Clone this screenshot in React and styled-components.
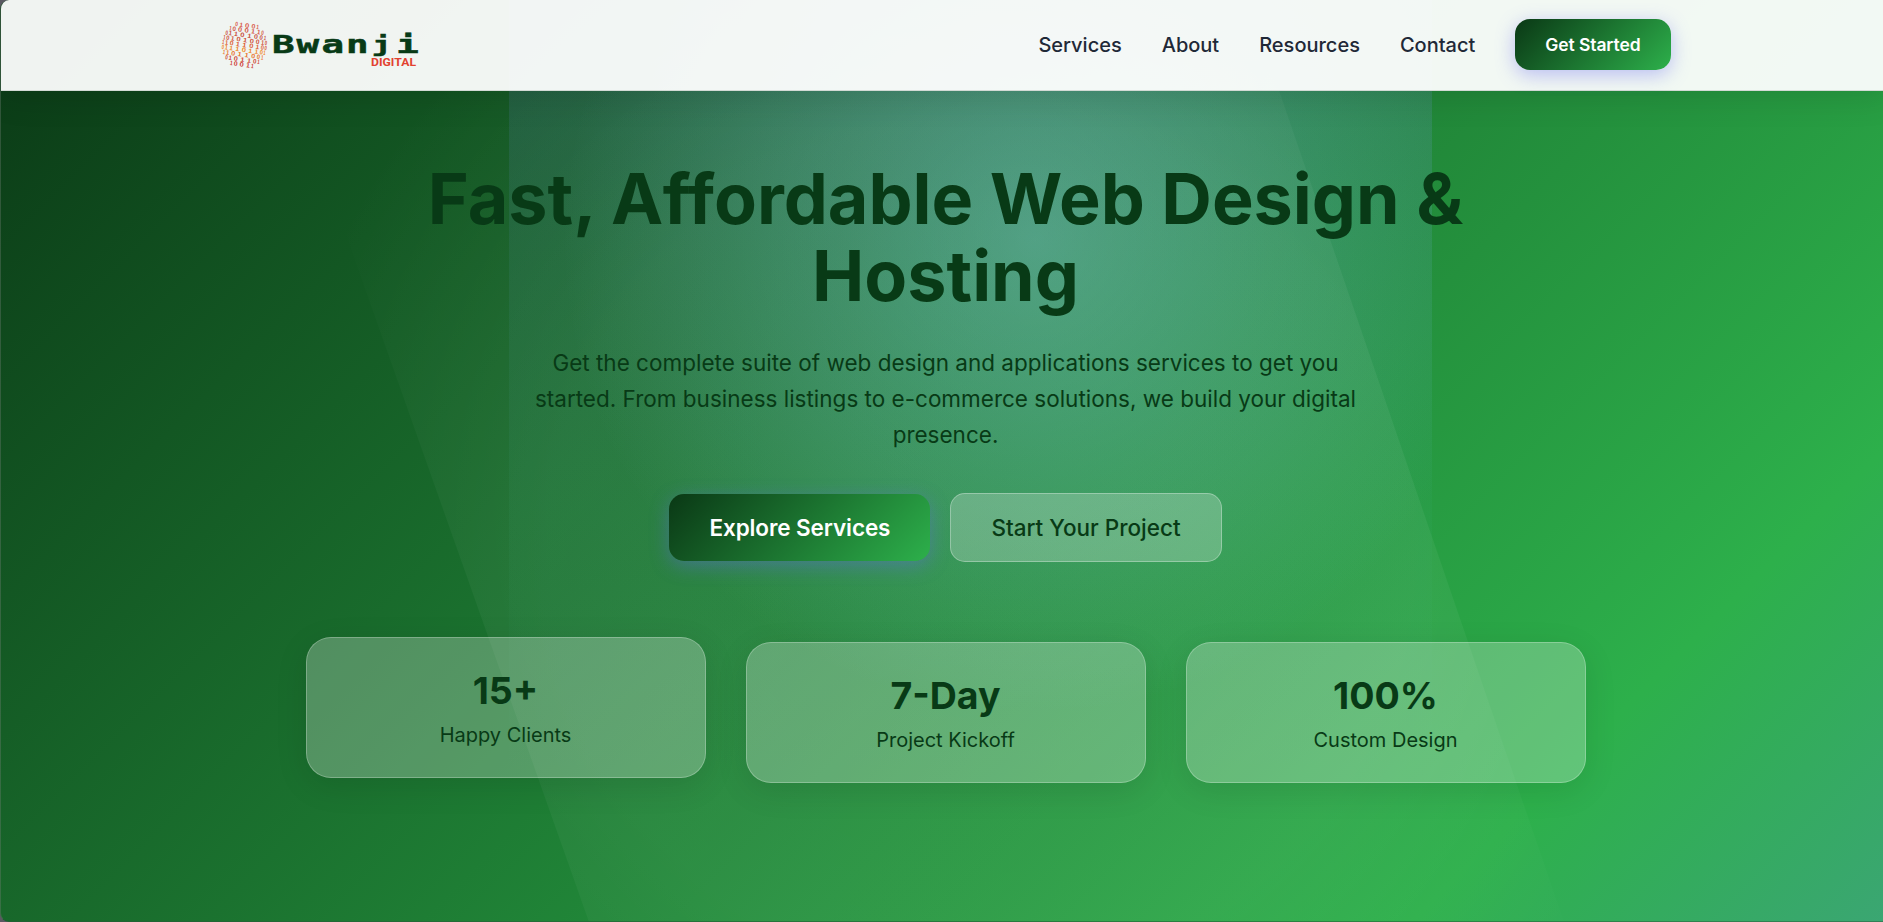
import React from "react";
import styled, { createGlobalStyle, css } from "styled-components";

const ink = "#083a16";
const brandGradient = "linear-gradient(135deg, #0a3815 0%, #2db04b 100%)";

const GlobalStyle = createGlobalStyle`
  *, *::before, *::after { box-sizing: border-box; }
  body {
    margin: 0;
    background: #5b5962;
    overflow: hidden;
    font-family: Inter, "Liberation Sans", sans-serif;
    -webkit-font-smoothing: antialiased;
  }
  h1, p { margin: 0; }
`;

const Page = styled.div`
  position: relative;
  width: 1890px;
  height: 922px;
  border-left: 1px solid rgba(120, 130, 122, 0.35);
  border-bottom: 1px solid rgba(40, 90, 60, 0.5);
  border-radius: 9px 0 0 9px;
  overflow: hidden;
  background: linear-gradient(135deg, #0a3815 0%, #2db04b 83%, #3ba673 100%) border-box;
`;

const Glow = styled.div`
  position: absolute;
  top: 0;
  left: 508px;
  width: 923px;
  height: 922px;
  background:
    radial-gradient(circle at 57% 26%, rgba(145, 220, 245, 0.33) 0%, rgba(145, 220, 245, 0) 55%),
    linear-gradient(180deg, rgba(110, 125, 215, 0.19) 0%, rgba(90, 150, 190, 0.11) 28%, rgba(70, 180, 150, 0.07) 55%, rgba(70, 180, 150, 0) 84%);
`;

const Beam = styled.div`
  position: absolute;
  inset: 0;
  clip-path: polygon(262px 0, 1247px 0, 1563px 922px, 588px 922px);
  background: radial-gradient(circle 720px at 980px 550px, rgba(255, 255, 255, 0.05) 0%, rgba(255, 255, 255, 0.055) 60%, rgba(255, 255, 255, 0) 100%);
`;

const Header = styled.header`
  position: relative;
  height: 91px;
  display: flex;
  justify-content: center;
  background: rgba(255, 255, 255, 0.94);
  border-bottom: 1px solid #d3dad5;
  box-shadow: 0 8px 32px rgba(0, 0, 0, 0.1);
`;

const HeaderInner = styled.div`
  width: 1450px;
  height: 89px;
  display: flex;
  align-items: center;
  justify-content: space-between;
`;

const Logo = styled.svg`
  display: block;
  width: 202px;
  height: 50px;
`;

const Nav = styled.nav`
  display: flex;
  align-items: center;
  gap: 40px;
`;

const NavLink = styled.a`
  color: #1f2937;
  font-size: 20px;
  font-weight: 500;
  text-decoration: none;
`;

const Button = styled.button`
  font-family: inherit;
  font-size: ${(p) => (p.$small ? "17.5px" : "22.5px")};
  line-height: ${(p) => (p.$small ? "21px" : "27px")};
  padding: ${(p) => (p.$small ? "15px 30px" : "20px 40px")};
  border-radius: 15px;
  white-space: nowrap;
  ${(p) =>
    p.$glass
      ? css`
          font-weight: 500;
          color: ${ink};
          background: rgba(255, 255, 255, 0.23);
          border: 1px solid rgba(255, 255, 255, 0.3);
        `
      : css`
          font-weight: 600;
          letter-spacing: -0.1px;
          color: #fff;
          background: ${brandGradient};
          border: 0;
          box-shadow: 0 5px 19px rgba(99, 102, 241, 0.4);
        `}
`;

const Hero = styled.main`
  position: relative;
  display: flex;
  flex-direction: column;
  align-items: center;
  padding-top: 69px;
  text-align: center;
  color: ${ink};
`;

const Title = styled.h1`
  width: 1125px;
  font-size: 70px;
  font-weight: 700;
  line-height: 77px;
`;

const Lead = styled.p`
  width: 850px;
  margin-top: 31px;
  font-size: 22.5px;
  line-height: 36px;
`;

const Actions = styled.div`
  display: flex;
  align-items: center;
  gap: 20px;
  margin-top: 40px;
`;

const Stats = styled.section`
  display: flex;
  gap: 40px;
  margin-top: 80px;
`;

const Stat = styled.div`
  width: 400px;
  height: 141px;
  padding-top: 29px;
  border: 1px solid rgba(255, 255, 255, 0.25);
  border-radius: 25px;
  background: rgba(255, 255, 255, 0.25);
  box-shadow: 0 8px 32px rgba(0, 0, 0, 0.1);
  transform: translateY(${(p) => (p.$raised ? "-5px" : "0")});
`;

const StatValue = styled.div`
  font-size: 37.5px;
  font-weight: 700;
  line-height: 48px;
`;

const StatLabel = styled.div`
  margin-top: 4px;
  font-size: 20px;
  line-height: 32px;
`;

const rows = ["01001", "1000110", "01101001", "101010010", "110110100", "011101101", "11011001", "0101101", "10011"];
const rowColors = ["#d9604f", "#d4584a", "#c9503f", "#d0543d", "#dd6238", "#f08a2c", "#e8752f", "#cf4b3b", "#cf4038"];

const digits = rows.flatMap((row, r) => {
  const y = (r - 4) * 4.9;
  const half = Math.sqrt(23 * 23 - y * y);
  return [...row].map((d, c) => {
    const lon = ((c + 0.5) / row.length - 0.5) * 2.7;
    return {
      d,
      x: half * Math.sin(lon),
      y,
      sx: 0.35 + 0.85 * Math.cos(lon),
      color: rowColors[r],
    };
  });
});

const BrandLogo = () => (
  <Logo viewBox="0 0 202 50" role="img" aria-label="Bwanji Digital">
    <g transform="translate(23.5 25) rotate(8)" fontFamily="Liberation Sans, sans-serif" fontSize="6.4" fontWeight="700" textAnchor="middle">
      {digits.map((g, i) => (
        <text key={i} transform={`translate(${g.x} ${g.y + 2.2}) scale(${g.sx} 1)`} fill={g.color}>
          {g.d}
        </text>
      ))}
    </g>
    <text transform="translate(51 33) scale(1.5 1)" x="0 16.4 33 49.3 66.5 82.8" fill={ink} stroke={ink} strokeWidth="0.5" fontFamily="DejaVu Sans Mono, monospace" fontWeight="700" fontSize="25">
      Bwan<tspan fontSize="22" dy="-1.5">j</tspan><tspan dy="1.5">i</tspan>
    </text>
    <text x="150" y="46.3" textLength="45" lengthAdjust="spacingAndGlyphs" fill="#e2412f" fontFamily="Roboto, sans-serif" fontWeight="700" fontSize="11.5">
      DIGITAL
    </text>
  </Logo>
);

export default function App() {
  return (
    <>
      <GlobalStyle />
      <Page>
        <Glow />
        <Beam />
        <Header>
          <HeaderInner>
            <BrandLogo />
            <Nav>
              <NavLink>Services</NavLink>
              <NavLink>About</NavLink>
              <NavLink>Resources</NavLink>
              <NavLink>Contact</NavLink>
              <Button $small>Get Started</Button>
            </Nav>
          </HeaderInner>
        </Header>
        <Hero>
          <Title>Fast, Affordable Web Design &amp; Hosting</Title>
          <Lead>
            Get the complete suite of web design and applications services to get you started. From business listings to
            e-commerce solutions, we build your digital presence.
          </Lead>
          <Actions>
            <Button>Explore Services</Button>
            <Button $glass>Start Your Project</Button>
          </Actions>
          <Stats>
            <Stat $raised>
              <StatValue>15+</StatValue>
              <StatLabel>Happy Clients</StatLabel>
            </Stat>
            <Stat>
              <StatValue>7-Day</StatValue>
              <StatLabel>Project Kickoff</StatLabel>
            </Stat>
            <Stat>
              <StatValue>100%</StatValue>
              <StatLabel>Custom Design</StatLabel>
            </Stat>
          </Stats>
        </Hero>
      </Page>
    </>
  );
}
